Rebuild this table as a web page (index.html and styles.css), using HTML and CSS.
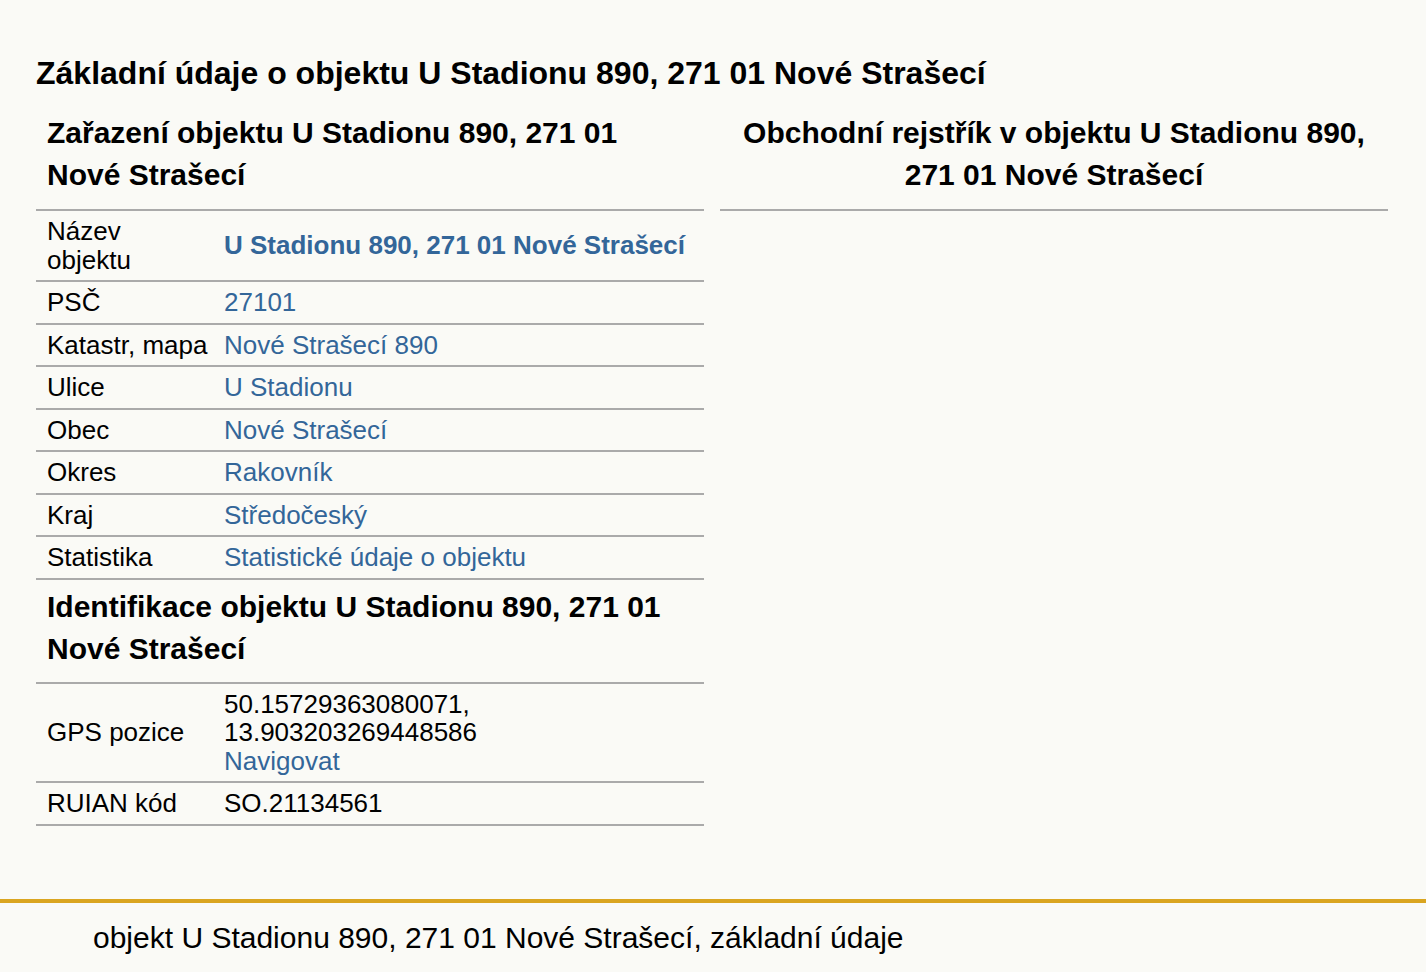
FILE: index.html
```html
<!DOCTYPE html>
<html lang="cs">
<head>
  <meta charset="UTF-8" />
  <title>objekt U Stadionu 890, 271 01 Nové Strašecí</title>
  <link rel="stylesheet" href="styles.css">
</head>
<body>

  <main class="page">
    <h1>Základní údaje o objektu U Stadionu 890, 271 01 Nové Strašecí</h1>

    <div class="columns">
      <section class="col">
        <h2>Zařazení objektu U Stadionu 890, 271 01 Nové Strašecí</h2>
        <table class="info">
          <tr>
            <td class="label">Název objektu</td>
            <td><a href="#" class="strong">U Stadionu 890, 271 01 Nové Strašecí</a></td>
          </tr>
          <tr>
            <td class="label">PSČ</td>
            <td><a href="#">27101</a></td>
          </tr>
          <tr>
            <td class="label">Katastr, mapa</td>
            <td><a href="#">Nové Strašecí 890</a></td>
          </tr>
          <tr>
            <td class="label">Ulice</td>
            <td><a href="#">U Stadionu</a></td>
          </tr>
          <tr>
            <td class="label">Obec</td>
            <td><a href="#">Nové Strašecí</a></td>
          </tr>
          <tr>
            <td class="label">Okres</td>
            <td><a href="#">Rakovník</a></td>
          </tr>
          <tr>
            <td class="label">Kraj</td>
            <td><a href="#">Středočeský</a></td>
          </tr>
          <tr>
            <td class="label">Statistika</td>
            <td><a href="#">Statistické údaje o objektu</a></td>
          </tr>
        </table>

        <h2 class="sub">Identifikace objektu U Stadionu 890, 271 01 Nové Strašecí</h2>
        <table class="info">
          <tr>
            <td class="label">GPS pozice</td>
            <td>50.15729363080071,<br>13.903203269448586<br><a href="#">Navigovat</a></td>
          </tr>
          <tr>
            <td class="label">RUIAN kód</td>
            <td>SO.21134561</td>
          </tr>
        </table>
      </section>

      <section class="col">
        <h2 class="center">Obchodní rejstřík v objektu U Stadionu 890, 271 01 Nové Strašecí</h2>
      </section>
    </div>
  </main>

  <footer class="foot">
    objekt U Stadionu 890, 271 01 Nové Strašecí, základní údaje
  </footer>

</body>
</html>
```

FILE: styles.css
```css
body {
  font-family: "Liberation Sans", Arial, sans-serif;
  margin: 0;
  padding: 0;
  background: #fafaf6;
  color: #000;
}
a {
  color: #336699;
  text-decoration: none;
}
a.strong {
  font-weight: bold;
}

.page {
  padding: 0 38px 0 36px;
}
h1 {
  font-size: 32px;
  line-height: 42px;
  margin: 52px 0 18px;
}

.columns {
  display: grid;
  grid-template-columns: 1fr 1fr;
  gap: 16px;
  align-items: start;
}
.col h2 {
  font-size: 30px;
  line-height: 42px;
  margin: 0;
  padding: 0 11px 13px;
}
.col h2.sub {
  padding: 6px 11px 12px;
}
.col h2.center {
  text-align: center;
  border-bottom: 2px solid #aaa;
}

.info {
  width: 100%;
  table-layout: fixed;
  border-collapse: collapse;
  border-top: 2px solid #aaa;
  font-size: 26px;
  line-height: 28.5px;
}
.info td {
  border-bottom: 2px solid #aaa;
  padding: 6px 0;
  vertical-align: middle;
}
.info td.label {
  box-sizing: border-box;
  width: 188px;
  padding-left: 11px;
  padding-right: 15px;
}

.foot {
  margin-top: 73px;
  border-top: 4px solid #daa520;
  padding: 14px 0 12px 93px;
  font-size: 30px;
  line-height: 42px;
}
```
